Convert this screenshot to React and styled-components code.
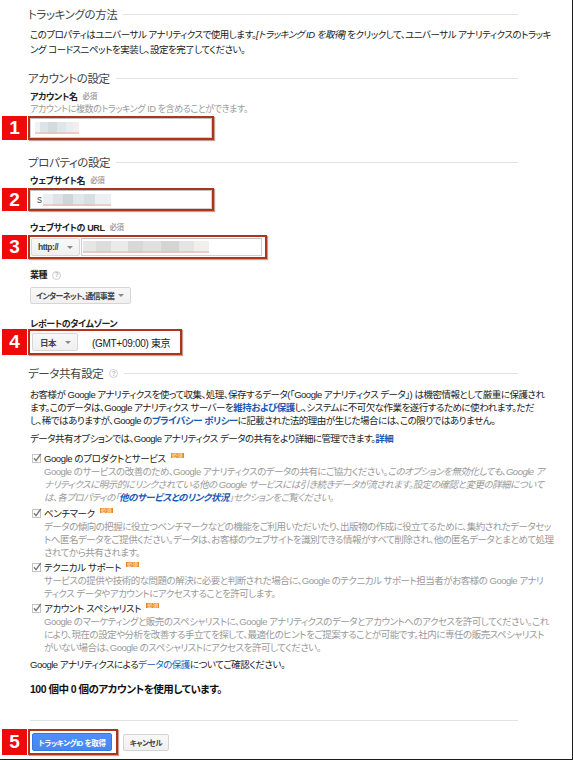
import React from "react";
import styled, { createGlobalStyle } from "styled-components";

const GlobalStyle = createGlobalStyle`
  html, body { margin: 0; padding: 0; background: #fff; }
  body {
    font-family: "Liberation Sans", Arial, "Noto Sans CJK JP", sans-serif;
    font-feature-settings: "palt" 1;
  }
  * { box-sizing: border-box; }
`;

const Frame = styled.div`
  width: 573px;
  height: 760px;
  border-right: 1px solid #1e1e1e;
  border-bottom: 1px solid #1e1e1e;
  background: #fff;
  overflow: hidden;
`;

const Content = styled.div`
  padding: 6px 54px 0 30px;
  display: flex;
  flex-direction: column;
`;

const SectionTitle = styled.div`
  display: flex;
  align-items: center;
  gap: 6px;
  height: 16px;
  margin-top: ${(p) => p.$mt || 0}px;
  margin-left: -2px;
  font-size: 11.5px;
  color: #444;
  white-space: nowrap;
  letter-spacing: -0.4px;
  &::after {
    content: "";
    flex: 1;
    height: 1px;
    background: #e3e3e3;
  }
`;

const Para = styled.div`
  margin-top: ${(p) => p.$mt || 0}px;
  font-size: 9.5px;
  line-height: ${(p) => p.$lh || 13}px;
  color: #222;
  white-space: nowrap;
  letter-spacing: -0.5px;
`;

const Line = styled.span`
  display: block;
`;

const Em = styled.i`
  font-style: italic;
`;

const Link = styled.a`
  color: #1a5bb8;
  font-weight: ${(p) => (p.$bold ? "bold" : "normal")};
  font-style: ${(p) => (p.$italic ? "italic" : "normal")};
  text-decoration: none;
`;

const FieldLabel = styled.div`
  margin-top: ${(p) => p.$mt || 0}px;
  font-size: 9px;
  font-weight: bold;
  line-height: 12px;
  color: #222;
  white-space: nowrap;
  letter-spacing: -0.4px;
  display: flex;
  align-items: center;
`;

const Required = styled.span`
  margin-left: 5px;
  font-size: 7.5px;
  color: #a3a3a3;
  font-weight: bold;
`;

const Helper = styled.div`
  font-size: 9px;
  line-height: 12px;
  color: #9a9a9a;
  white-space: nowrap;
  letter-spacing: -0.4px;
`;

const AnnotRow = styled.div`
  display: flex;
  align-items: stretch;
  gap: 1px;
  height: ${(p) => p.$h}px;
  margin-top: ${(p) => p.$mt || 0}px;
  margin-left: -28px;
`;

const Badge = styled.div`
  width: 25px;
  background: #ee0a0a;
  color: #fff;
  font-family: "Liberation Sans", Arial, sans-serif;
  font-weight: bold;
  font-size: 19px;
  display: flex;
  align-items: center;
  justify-content: center;
`;

const Callout = styled.div`
  width: ${(p) => p.$w}px;
  border: 2px solid #ad3519;
  box-shadow: 1px 1px 1px rgba(130, 45, 15, 0.45);
  background: #fff;
  display: flex;
  align-items: ${(p) => p.$align || "stretch"};
  padding: ${(p) => p.$pad || "0"};
  gap: ${(p) => p.$gap || 0}px;
`;

const TextBox = styled.div`
  flex: 1;
  border: 1px solid #cfcfcf;
  border-top-color: #c0c0c0;
  background: #fff;
  display: flex;
  align-items: center;
  padding-left: ${(p) => p.$pl || 4}px;
`;

const Mosaic = styled.span`
  display: block;
  width: ${(p) => p.$w}px;
  height: ${(p) => p.$h || 12}px;
  background:
    linear-gradient(180deg, transparent 0 82%, rgba(235, 190, 180, 0.7) 82% 100%),
    linear-gradient(90deg, ${(p) => p.$stops});
`;

const Glyph = styled.span`
  font-size: 10px;
  color: #555;
  margin-right: 1px;
`;

const Select = styled.div`
  display: flex;
  align-items: center;
  justify-content: space-between;
  width: ${(p) => p.$w}px;
  height: ${(p) => p.$h || 18}px;
  margin-top: ${(p) => p.$mt || 0}px;
  padding: 0 6px 0 ${(p) => p.$pl || 7}px;
  background: linear-gradient(#f8f8f8, #f0f0f0);
  border: 1px solid #d6d6d6;
  border-radius: 2px;
  font-size: ${(p) => p.$fs || 8.5}px;
  font-weight: bold;
  color: #444;
  white-space: nowrap;
  letter-spacing: ${(p) => p.$ls || -0.5}px;
  flex-shrink: 0;
`;

const Caret = styled.span`
  flex-shrink: 0;
  width: 0;
  height: 0;
  border-left: 3px solid transparent;
  border-right: 3px solid transparent;
  border-top: 3px solid #8a8a8a;
`;

const TzText = styled.span`
  margin-left: 14px;
  font-size: 10px;
  color: #222;
  letter-spacing: -0.3px;
  white-space: nowrap;
`;

const HelpIcon = styled.span`
  display: inline-flex;
  align-items: center;
  justify-content: center;
  width: 9px;
  height: 9px;
  margin-left: ${(p) => (p.$tight ? 0 : 5)}px;
  border: 1px solid #cfcfcf;
  border-radius: 50%;
  font-size: 6.5px;
  font-weight: bold;
  color: #b5b5b5;
  letter-spacing: 0;
`;

const Option = styled.div`
  margin-top: ${(p) => p.$mt || 0}px;
`;

const OptionHead = styled.div`
  display: flex;
  align-items: center;
  height: 14px;
  padding-left: 2px;
  font-size: 9.5px;
  color: #222;
  white-space: nowrap;
  letter-spacing: -0.4px;
`;

const CheckWrap = styled.span`
  display: inline-flex;
  width: 10px;
  height: 10px;
  margin-right: 2px;
`;

const Tag = styled.span`
  align-self: flex-start;
  margin-top: 2px;
  margin-left: 5px;
  padding: 0 1px;
  background: #ea861f;
  color: #fbd9b0;
  font-size: 5.5px;
  line-height: 5px;
  height: 5px;
  font-weight: bold;
  letter-spacing: 0;
  overflow: hidden;
`;

const Desc = styled.div`
  padding-left: 14px;
  font-size: 9.5px;
  line-height: 13px;
  color: #9a9a9a;
  white-space: nowrap;
  letter-spacing: -0.5px;
`;

const Count = styled.div`
  margin-top: ${(p) => p.$mt || 0}px;
  font-size: 10.5px;
  line-height: 14px;
  font-weight: bold;
  color: #111;
  white-space: nowrap;
  letter-spacing: -0.5px;
`;

const Rule = styled.div`
  margin-top: ${(p) => p.$mt || 0}px;
  height: 1px;
  background: #e3e3e3;
`;

const PrimaryButton = styled.div`
  width: 80px;
  height: 18px;
  background: linear-gradient(#4d90fe, #4787ed);
  border: 1px solid #3079ed;
  border-radius: 2px;
  color: #fff;
  font-size: 7.5px;
  font-weight: bold;
  display: flex;
  align-items: center;
  justify-content: center;
  white-space: nowrap;
  letter-spacing: -0.4px;
`;

const SecondaryButton = styled.div`
  align-self: center;
  margin-left: 4px;
  width: 46px;
  height: 17px;
  background: linear-gradient(#f8f8f8, #f0f0f0);
  border: 1px solid #d3d3d3;
  border-radius: 2px;
  color: #444;
  font-size: 7.5px;
  font-weight: bold;
  display: flex;
  align-items: center;
  justify-content: center;
  white-space: nowrap;
  letter-spacing: -0.4px;
`;

const Check = () => (
  <CheckWrap>
    <svg width="10" height="10" viewBox="0 0 10 10">
      <rect x="0.5" y="1.5" width="8" height="8" fill="#fff" stroke="#c4c4c4" />
      <path d="M2 5.2 L4 7.6 L8.8 1" fill="none" stroke="#7a7a7a" strokeWidth="1.4" />
    </svg>
  </CheckWrap>
);

const mosaicA =
  "#f1f3f4 0 12%, #dde4e7 12% 30%, #d3dbdf 30% 50%, #dfe6e9 50% 70%, #e9edef 70% 86%, #f6eeee 86% 100%";
const mosaicB =
  "#eceff1 0 14%, #dde3e6 14% 30%, #cfd6da 30% 44%, #e2e7ea 44% 60%, #d8dfe2 60% 76%, #ecf0f2 76% 100%";
const mosaicC =
  "#e6e6e6 0 10%, #dcdcdc 10% 22%, #eaeaea 22% 36%, #d8d8d8 36% 48%, #e0e0e0 48% 62%, #d4d4d4 62% 76%, #e4e4e4 76% 88%, #f2eeee 88% 100%";

export default function App() {
  return (
    <>
      <GlobalStyle />
      <Frame>
        <Content>
          <SectionTitle>トラッキングの方法</SectionTitle>
          <Para $mt={5} $lh={15}>
            <Line>
              このプロパティはユニバーサル アナリティクスで使用します。
              <Em>[トラッキング ID を取得]</Em> をクリックして、ユニバーサル アナリティクスのトラッキ
            </Line>
            <Line>ング コードスニペットを実装し、設定を完了してください。</Line>
          </Para>

          <SectionTitle $mt={13}>アカウントの設定</SectionTitle>
          <FieldLabel $mt={5}>
            アカウント名<Required>必須</Required>
          </FieldLabel>
          <Helper>アカウントに複数のトラッキング ID を含めることができます。</Helper>
          <AnnotRow $h={24} $mt={1}>
            <Badge>1</Badge>
            <Callout $w={186}>
              <TextBox $pl={4}>
                <Mosaic $w={44} $stops={mosaicA} />
              </TextBox>
            </Callout>
          </AnnotRow>

          <SectionTitle $mt={14}>プロパティの設定</SectionTitle>
          <FieldLabel $mt={5}>
            ウェブサイト名<Required>必須</Required>
          </FieldLabel>
          <AnnotRow $h={23} $mt={1}>
            <Badge>2</Badge>
            <Callout $w={186}>
              <TextBox $pl={6}>
                <Glyph>s</Glyph>
                <Mosaic $w={68} $stops={mosaicB} />
              </TextBox>
            </Callout>
          </AnnotRow>

          <FieldLabel $mt={11}>
            ウェブサイトの URL<Required>必須</Required>
          </FieldLabel>
          <AnnotRow $h={24} $mt={1}>
            <Badge>3</Badge>
            <Callout $w={239} $pad="1px 3px 1px 1px" $gap={1}>
              <Select $w={49} $h={18} $pl={6}>
                http://
                <Caret />
              </Select>
              <TextBox $pl={1}>
                <Mosaic $w={126} $h={12} $stops={mosaicC} />
              </TextBox>
            </Callout>
          </AnnotRow>

          <FieldLabel $mt={10}>
            業種<HelpIcon>?</HelpIcon>
          </FieldLabel>
          <Select $w={101} $h={17} $mt={6} $pl={5} $fs={8} $ls={-0.7}>
            インターネット、通信事業
            <Caret />
          </Select>

          <FieldLabel $mt={14}>レポートのタイムゾーン</FieldLabel>
          <AnnotRow $h={26} $mt={-1}>
            <Badge>4</Badge>
            <Callout $w={154} $align="center" $pad="0 0 0 2px">
              <Select $w={46} $h={18} $pl={7}>
                日本
                <Caret />
              </Select>
              <TzText>(GMT+09:00) 東京</TzText>
            </Callout>
          </AnnotRow>

          <SectionTitle $mt={10}>
            データ共有設定<HelpIcon $tight>?</HelpIcon>
          </SectionTitle>
          <Para $mt={7}>
            <Line>
              お客様が Google アナリティクスを使って収集、処理、保存するデータ(「Google アナリティクス データ」) は機密情報として厳重に保護され
            </Line>
            <Line>
              ます。このデータは、Google アナリティクス サーバーを<Link $bold>維持および保護</Link>し、システムに不可欠な作業を遂行するために使われます。ただ
            </Line>
            <Line>
              し、稀ではありますが、Google の<Link $bold>プライバシー ポリシー</Link>に記載された法的理由が生じた場合には、この限りではありません。
            </Line>
          </Para>
          <Para $mt={5}>
            データ共有オプションでは、Google アナリティクス データの共有をより詳細に管理できます。
            <Link $bold>詳細</Link>
          </Para>

          <Option $mt={6}>
            <OptionHead>
              <Check />
              Google のプロダクトとサービス<Tag>必須</Tag>
            </OptionHead>
            <Desc>
              <Line>
                Google のサービスの改善のため、Google アナリティクスのデータの共有にご協力ください。
                <Em>このオプションを無効化しても、Google ア</Em>
              </Line>
              <Line>
                <Em>ナリティクスに明示的にリンクされている他の Google サービスには引き続きデータが流されます。設定の確認と変更の詳細について</Em>
              </Line>
              <Line>
                <Em>
                  は、各プロパティの「<Link $bold $italic>他のサービスとのリンク状況</Link>」セクションをご覧ください。
                </Em>
              </Line>
            </Desc>
          </Option>

          <Option $mt={2}>
            <OptionHead>
              <Check />
              ベンチマーク<Tag>必須</Tag>
            </OptionHead>
            <Desc>
              <Line>
                データの傾向の把握に役立つベンチマークなどの機能をご利用いただいたり、出版物の作成に役立てるために、集約されたデータセッ
              </Line>
              <Line>
                トへ匿名データをご提供ください。データは、お客様のウェブサイトを識別できる情報がすべて削除され、他の匿名データとまとめて処理
              </Line>
              <Line>されてから共有されます。</Line>
            </Desc>
          </Option>

          <Option $mt={1}>
            <OptionHead>
              <Check />
              テクニカル サポート<Tag>必須</Tag>
            </OptionHead>
            <Desc>
              <Line>
                サービスの提供や技術的な問題の解決に必要と判断された場合に、Google のテクニカル サポート担当者がお客様の Google アナリ
              </Line>
              <Line>ティクス データやアカウントにアクセスすることを許可します。</Line>
            </Desc>
          </Option>

          <Option $mt={1}>
            <OptionHead>
              <Check />
              アカウント スペシャリスト<Tag>必須</Tag>
            </OptionHead>
            <Desc>
              <Line>
                Google のマーケティングと販売のスペシャリストに、Google アナリティクスのデータとアカウントへのアクセスを許可してください。これ
              </Line>
              <Line>
                により、現在の設定や分析を改善する手立てを探して、最適化のヒントをご提案することが可能です。社内に専任の販売スペシャリスト
              </Line>
              <Line>がいない場合は、Google のスペシャリストにアクセスを許可してください。</Line>
            </Desc>
          </Option>

          <Para $mt={4}>
            Google アナリティクスによる<Link>データの保護</Link>についてご確認ください。
          </Para>

          <Count $mt={11}>100 個中 0 個のアカウントを使用しています。</Count>

          <Rule $mt={24} />

          <AnnotRow $h={26} $mt={8}>
            <Badge>5</Badge>
            <Callout $w={90} $align="center" $pad="0 4px 0 2px">
              <PrimaryButton>トラッキングID を取得</PrimaryButton>
            </Callout>
            <SecondaryButton>キャンセル</SecondaryButton>
          </AnnotRow>
        </Content>
      </Frame>
    </>
  );
}
